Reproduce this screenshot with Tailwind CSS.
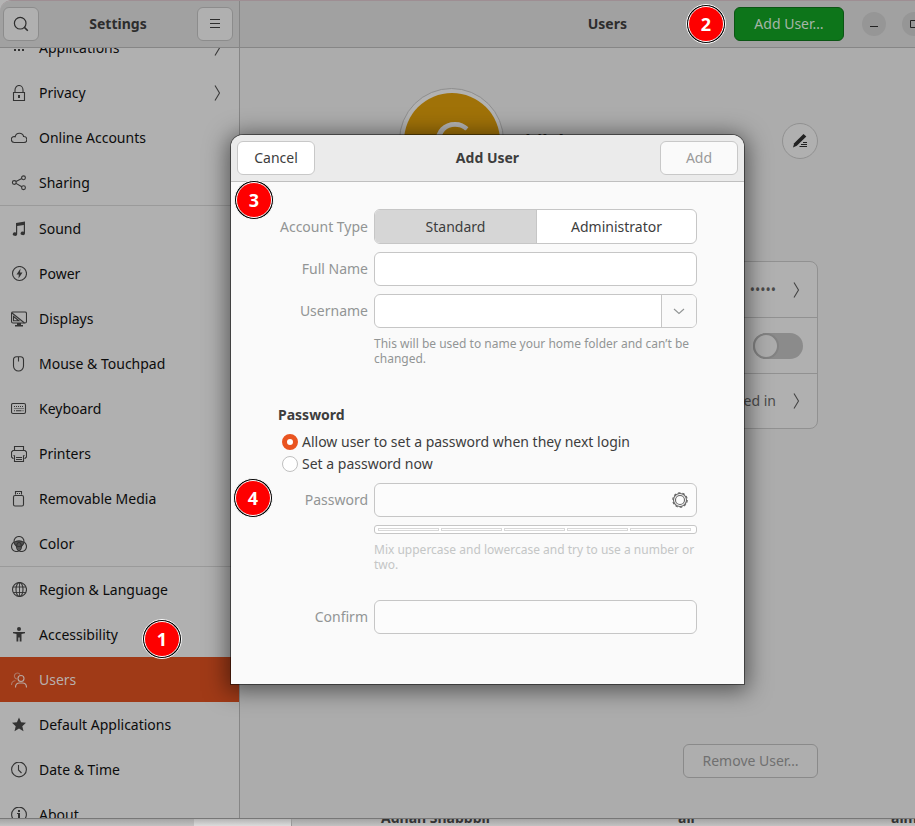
<!DOCTYPE html>
<html lang="en">
<head>
<meta charset="utf-8">
<title>Settings – Users</title>
<script src="https://cdn.jsdelivr.net/npm/@tailwindcss/browser@4"></script>
</head>
<body class="relative flex h-screen flex-col overflow-hidden bg-[#b4b4b4] font-['Noto_Sans',sans-serif] text-sm text-[#0c0c0c]">

<div class="flex min-h-0 flex-1 overflow-hidden rounded-tl-xl border-t border-[#9e8e93] bg-[#acacac]">
  <!-- Sidebar -->
  <aside class="flex w-60 shrink-0 flex-col border-r border-[#868686] bg-[#b0b0b0]">
    <header class="flex h-[47px] shrink-0 items-center justify-between border-b border-[#868686] bg-[#a1a1a1] px-[3px]">
      <button aria-label="Search" class="flex h-[34px] w-9 items-center justify-center rounded-md border border-[#8c8c8c] bg-[#b0b0b0]">
        <svg class="size-4" viewBox="0 0 16 16" fill="none" stroke="#2d2d2d" stroke-width="1.2"><circle cx="7.2" cy="7.2" r="5.8"/><path d="M11.4 11.4l3.4 3.4" stroke-width="1.5"/></svg>
      </button>
      <h1 class="font-bold text-[#2d2d2d]">Settings</h1>
      <button aria-label="Menu" class="mr-[3px] flex h-[34px] w-9 items-center justify-center rounded-md border border-[#8c8c8c] bg-[#b0b0b0]">
        <svg class="size-4" viewBox="0 0 16 16" stroke="#2d2d2d" stroke-width="1"><path d="M3 3.5h10M3 7.5h10M3 11.5h10"/></svg>
      </button>
    </header>
    <nav class="min-h-0 flex-1 overflow-hidden">
      <ul class="-mt-[23px] text-[#0c0c0c]">
        <li><a href="#" class="flex h-[45px] items-center gap-3 px-[11px]"><svg class="size-4" viewBox="0 0 16 16" fill="#333"><path d="M3 9h2v2H3zM7 9h2v2H7zM11 9h2v2h-2z"/></svg><span class="flex-1">Applications</span><svg class="mr-[7px] h-4 w-2" viewBox="0 0 8 16" fill="none" stroke="#3a3a3a" stroke-width="1.1"><path d="M2 .5L6.500 8L2 15.500"/></svg></a></li>
        <li><a href="#" class="flex h-[45px] items-center gap-3 px-[11px]"><svg class="size-4" viewBox="0 0 16 16" fill="none" stroke="#333" stroke-width="1.1"><path d="M2.500 7.500h11v8h-11zM4 7.500V5a4 4.500 0 0 1 8 0v2.500"/><path d="M7 10h2v3H7z" fill="#333" stroke="none"/></svg><span class="flex-1">Privacy</span><svg class="mr-[7px] h-4 w-2" viewBox="0 0 8 16" fill="none" stroke="#3a3a3a" stroke-width="1.1"><path d="M2 .5L6.500 8L2 15.500"/></svg></a></li>
        <li><a href="#" class="flex h-[45px] items-center gap-3 px-[11px]"><svg class="size-4" viewBox="0 0 16 16" fill="none" stroke="#333" stroke-width="1.1"><path d="M3.500 12.500a3 3 0 0 1-.3-6c.3 0 .8.1 1 .2A4.300 4.300 0 0 1 12.600 6.500a3 3 0 0 1 .4 6z"/></svg>Online Accounts</a></li>
        <li><a href="#" class="flex h-[45px] items-center gap-3 px-[11px]"><svg class="size-4" viewBox="0 0 16 16" fill="none" stroke="#333" stroke-width="1.1"><circle cx="3.300" cy="7.500" r="1.900"/><circle cx="12.500" cy="2.800" r="1.900"/><circle cx="12.500" cy="12.700" r="1.900"/><path d="M5 6.600l5.800-3M5 8.400l5.800 3.400"/></svg>Sharing</a></li>
        <li class="border-t border-[#9a9a9a]"><a href="#" class="flex h-[45px] items-center gap-3 px-[11px]"><svg class="size-4" viewBox="0 0 16 16" fill="#333"><path d="M5 2l9-1.500V12.500a2.200 1.800 0 1 1-1.200-1.800V4L6.200 5v8.200a2.200 1.800 0 1 1-1.200-1.700z"/></svg>Sound</a></li>
        <li><a href="#" class="flex h-[45px] items-center gap-3 px-[11px]"><svg class="size-4" viewBox="0 0 16 16" fill="none" stroke="#333" stroke-width="1.1"><circle cx="8.500" cy="7.500" r="7"/><path d="M9.500 2.500L5.500 8.500h2.300L7.500 12.500l4-6H9z" fill="#333" stroke="none"/></svg>Power</a></li>
        <li><a href="#" class="flex h-[45px] items-center gap-3 px-[11px]"><svg class="size-4" viewBox="0 0 16 16" fill="none" stroke="#333" stroke-width="1.1"><rect x=".5" y="1" width="15" height="11" rx="1.500"/><path d="M1 2l12.500 10M2.500 5.500v4.300h5.400z"/><path d="M6 12h4v2h2v1.500H4V14h2z" fill="#333" stroke="none"/></svg>Displays</a></li>
        <li><a href="#" class="flex h-[45px] items-center gap-3 px-[11px]"><svg class="size-4" viewBox="0 0 16 16" fill="none" stroke="#333" stroke-width="1.1"><path d="M5.500.8h4C11.500.8 12.500 2 12.500 4v6a5 5 0 0 1-10 0V4C2.500 2 3.500.8 5.500.8zM7.500 1v4.500"/></svg>Mouse &amp; Touchpad</a></li>
        <li><a href="#" class="flex h-[45px] items-center gap-3 px-[11px]"><svg class="size-4" viewBox="0 0 16 16" fill="none" stroke="#333" stroke-width="1.1"><rect x=".5" y="2.500" width="14" height="10" rx="1.500"/><path d="M3 5.500h9.500M3.500 7.500h9" stroke-dasharray="1 1"/><path d="M3 9.800h1M5 9.800h5.500M11.500 9.800h1"/></svg>Keyboard</a></li>
        <li><a href="#" class="flex h-[45px] items-center gap-3 px-[11px]"><svg class="size-4" viewBox="0 0 16 16" fill="none" stroke="#333" stroke-width="1.100"><path d="M3.500 4.500v-4h9v4M2.500 12.500H2L.5 11V6L2 4.500h12L15.500 6v5L14 12.500h-.5M3.500 9.500v6h9v-6M5 11.500h6M5 13.500h6M2.500 9.500h1M12.500 9.500h1"/></svg>Printers</a></li>
        <li><a href="#" class="flex h-[45px] items-center gap-3 px-[11px]"><svg class="size-4" viewBox="0 0 16 16" fill="none" stroke="#333" stroke-width="1.100"><rect x="2.500" y="4.500" width="10" height="10.500" rx="1.500"/><path d="M4.500 3.500V0.500h6v3M6 2.500h1M8 2.500h1"/></svg>Removable Media</a></li>
        <li><a href="#" class="flex h-[45px] items-center gap-3 px-[11px]"><svg class="size-4" viewBox="0 0 16 16" fill="none" stroke="#333" stroke-width="1.100"><circle cx="8" cy="5.500" r="5"/><circle cx="5.500" cy="10.500" r="5"/><circle cx="10.500" cy="10.500" r="5"/><path d="M3.500 6a6 6 0 0 1 9 0c0 3-2 6-4.500 8.500C5.500 12 3.500 9 3.500 6z" fill="#333" fill-opacity=".75" stroke="none"/></svg>Color</a></li>
        <li class="border-t border-[#9a9a9a]"><a href="#" class="flex h-[45px] items-center gap-3 px-[11px]"><svg class="size-4" viewBox="0 0 16 16" fill="none" stroke="#333" stroke-width="1.100"><circle cx="8.500" cy="7.500" r="7"/><ellipse cx="8.500" cy="7.500" rx="3.500" ry="7"/><path d="M8.500.5v14M2 5h13M2 10.500h13" stroke-width=".9"/></svg>Region &amp; Language</a></li>
        <li><a href="#" class="flex h-[45px] items-center gap-3 px-[11px]"><svg class="size-4" viewBox="0 0 16 16" fill="#333"><circle cx="8" cy="2" r="2"/><path d="M2 5h12v1.200l-3.500.9V14.500H8.700v-4H7.300v4H5.500V7.100L2 6.200z"/></svg>Accessibility</a></li>
        <li><a href="#" aria-current="page" class="flex h-[45px] items-center gap-3 bg-[#a03a17] px-[11px] text-[#b8b0ae]"><svg class="size-4" viewBox="0 0 16 16" fill="none" stroke="#b8a8a2" stroke-width="1.100"><circle cx="10" cy="6.500" r="3"/><path d="M4.500 15.500c0-3.500 2-4.500 4-4.500h3c2 0 4 1 4 4.500"/><path d="M6 7A3 3 0 1 1 9 2.500M.5 13c0-3 1.500-4 4-4.200" opacity=".55"/></svg>Users</a></li>
        <li><a href="#" class="flex h-[45px] items-center gap-3 px-[11px]"><svg class="size-4" viewBox="0 0 16 16" fill="#333"><path d="M8 .5l2.100 4.800 4.900.4-3.700 3.500 1.200 5.100L8 11.500l-4.500 2.800 1.200-5.100L1 5.700l4.900-.4z"/></svg>Default Applications</a></li>
        <li><a href="#" class="flex h-[45px] items-center gap-3 px-[11px]"><svg class="size-4" viewBox="0 0 16 16" fill="none" stroke="#333" stroke-width="1.100"><circle cx="8" cy="7.500" r="7.400"/><path d="M7.500 3v5l3 3"/></svg>Date &amp; Time</a></li>
        <li><a href="#" class="flex h-[45px] items-center gap-3 px-[11px]"><svg class="size-4" viewBox="0 0 16 16" fill="none" stroke="#333" stroke-width="1.100"><circle cx="8" cy="7.500" r="7.400"/><path d="M7 3h2v2H7zM6 6h3v5h1v1H6v-1h1V7H6z" fill="#333" stroke="none"/></svg>About</a></li>
      </ul>
    </nav>
  </aside>

  <!-- User panel -->
  <main class="flex min-w-0 flex-1 flex-col overflow-hidden">
    <header class="-mr-[11px] flex h-[47px] shrink-0 items-center justify-end border-b border-[#868686] bg-[#a1a1a1]">
      <h2 class="mr-[107px] font-bold text-[#2d2d2d]">Users</h2>
      <button class="mr-[18px] h-[34px] w-[110px] rounded-md border border-[#0b5514] bg-[#0d751a] text-[#a5b5a7]">Add User…</button>
      <button aria-label="Minimize" class="mr-4 flex size-6 items-center justify-center rounded-full bg-[#969696]"><svg class="size-4" viewBox="0 0 16 16" stroke="#222"><path d="M4 10.500h8"/></svg></button>
      <button aria-label="Maximize" class="flex size-6 items-center justify-center rounded-full bg-[#969696]"><svg class="size-4" viewBox="0 0 16 16" fill="none" stroke="#222"><path d="M4.500 4.500h7v7h-7z"/></svg></button>
    </header>
    <div class="flex min-h-0 flex-1 flex-col pt-10 pr-[97px] pb-10 pl-[159px]">
      <div class="flex items-center">
        <div class="flex size-[105px] items-center justify-center rounded-full border border-[#8e8e8e] bg-[#b2b2b2]">
          <div class="flex size-24 items-center justify-center rounded-full bg-[#a07208] font-['Lato',sans-serif] text-[56px] leading-none text-[#b5b5b5]">C</div>
        </div>
        <h3 class="ml-3 text-lg font-bold text-[#222]">chilal</h3>
        <button aria-label="Edit name" class="ml-auto flex size-9 items-center justify-center rounded-full border border-[#919191] bg-[#b0b0b0]"><svg class="size-4" viewBox="0 0 16 16"><path d="M1 14.500l1.200-4.300L11.500 1l2.800 2.400-9.500 9.300z" fill="#222"/><path d="M11 9.500h4M9 11.500h6M7.500 13.500H15" stroke="#222"/></svg></button>
      </div>
      <div class="mt-[68px] rounded-lg border border-[#919191] bg-[#b0b0b0] text-[#4a4a4a]">
        <button class="flex h-[55px] w-full items-center justify-end pr-[17px]">•••••<svg class="ml-4 h-4 w-2" viewBox="0 0 8 16" fill="none" stroke="#444" stroke-width="1.100"><path d="M2 .5L6.500 8L2 15.500"/></svg></button>
        <div class="flex h-14 items-center justify-end border-t border-[#919191] pr-3.5">
          <button role="switch" aria-checked="false" aria-label="Automatic Login" class="h-[26px] w-[50px] rounded-full bg-[#8b8b8b]"><span class="block size-[26px] rounded-full border-2 border-[#828282] bg-[#acacac]"></span></button>
        </div>
        <button class="flex h-[55px] w-full items-center justify-end border-t border-[#919191] pr-[17px]">Logged in<svg class="ml-4 h-4 w-2" viewBox="0 0 8 16" fill="none" stroke="#444" stroke-width="1.100"><path d="M2 .5L6.500 8L2 15.500"/></svg></button>
      </div>
      <button disabled class="mt-auto h-[34px] w-[135px] self-end rounded-md border border-[#8a8a8a] bg-[#aeaeae] text-[#707070]">Remove User…</button>
    </div>
  </main>
</div>

<!-- Window behind -->
<div class="flex h-2 shrink-0 overflow-hidden border-t border-[#777] bg-linear-to-b from-[#a4a4a4] to-[#c2c2c2]">
  <div class="w-[194px] shrink-0"></div>
  <div class="w-[98px] shrink-0 border-r border-[#999] bg-linear-to-b from-[#b4b4b4] to-[#dcdcdc]"></div>
  <div class="flex min-w-0 flex-1 items-end font-bold text-[#333]">
    <span class="ml-[89px] w-[297px] shrink-0 leading-4">Adnan Shabbbir</span><span class="w-[213px] shrink-0 leading-4">ali</span><span class="leading-4">alm</span>
  </div>
</div>

<!-- Add User dialog -->
<form role="dialog" aria-label="Add User" class="absolute top-[135px] left-[231px] w-[513px] rounded-t-xl bg-[#fafafa] text-[#3d3d3d] shadow-[0_0_0_1px_rgba(0,0,0,0.45),0_3px_22px_4px_rgba(0,0,0,0.5)]">
  <header class="flex h-[47px] items-center justify-between rounded-t-xl border-b border-[#bfbfbf] bg-[#ebebeb] px-1.5">
    <button type="button" class="h-[34px] w-[78px] rounded-md border border-[#c8c8c8] bg-white">Cancel</button>
    <h2 class="font-bold">Add User</h2>
    <button disabled class="h-[34px] w-[78px] rounded-md border border-[#c8c8c8] bg-[#fafafa] text-[#9a9a9a]">Add</button>
  </header>
  <div class="px-[47px] pt-[27px] pb-[50px]">
    <div class="grid grid-cols-[90px_1fr] items-center gap-x-1.5 gap-y-2 text-right">
      <span class="whitespace-nowrap text-[#929595]">Account Type</span>
      <div role="group" aria-label="Account Type" class="flex h-[35px] overflow-hidden rounded-md border border-[#c6c6c6] bg-white">
        <button type="button" aria-pressed="true" class="w-[162px] border-r border-[#c6c6c6] bg-[#d6d6d6]">Standard</button>
        <button type="button" aria-pressed="false" class="flex-1">Administrator</button>
      </div>
      <label for="full" class="text-[#929595]">Full Name</label>
      <input id="full" type="text" class="h-[34px] w-full rounded-md border border-[#c6c6c6] bg-white px-2 text-left">
      <label for="user" class="text-[#929595]">Username</label>
      <div class="flex h-[34px] overflow-hidden rounded-md border border-[#c6c6c6] bg-white">
        <input id="user" type="text" class="min-w-0 flex-1 px-2 text-left">
        <button type="button" aria-label="Suggestions" class="flex w-[35px] items-center justify-center border-l border-[#c6c6c6] bg-[#fafafa]"><svg class="size-4" viewBox="0 0 16 16" fill="none" stroke="#929595" stroke-width="1.100"><path d="M3 6l5 4.500L13 6"/></svg></button>
      </div>
      <p class="col-start-2 text-left text-xs leading-[15px] text-[#929595]">This will be used to name your home folder and can’t be changed.</p>
    </div>

    <fieldset class="mt-[39px]">
      <legend class="leading-5 font-bold">Password</legend>
      <label class="mt-[6px] ml-1 flex h-[22px] items-center gap-1"><input type="radio" name="mode" checked class="size-4 appearance-none rounded-full border border-[#c0c0c0] bg-white checked:border-[5px] checked:border-[#e95420]">Allow user to set a password when they next login</label>
      <label class="ml-1 flex h-[22px] items-center gap-1"><input type="radio" name="mode" class="size-4 appearance-none rounded-full border border-[#c0c0c0] bg-white checked:border-[5px] checked:border-[#e95420]">Set a password now</label>
    </fieldset>

    <div class="mt-2 grid grid-cols-[90px_1fr] items-center gap-x-1.5 gap-y-2 text-right">
      <label for="pw" class="text-[#929595]">Password</label>
      <div class="flex h-[34px] items-center rounded-md border border-[#c6c6c6] bg-[#fcfcfc] pr-2">
        <input id="pw" type="password" disabled class="min-w-0 flex-1 px-2">
        <button type="button" aria-label="Generate password"><svg class="size-4" viewBox="0 0 16 16" fill="none" stroke="#666"><circle cx="8" cy="8" r="7.200" stroke-width="1.200" stroke-dasharray="2.500 2.026"/><circle cx="8" cy="8" r="6.500" stroke-width="1.100"/><circle cx="8" cy="8" r="4.500" stroke-width="1.100"/></svg></button>
      </div>
      <div role="meter" aria-label="Password strength" aria-valuenow="0" aria-valuemin="0" aria-valuemax="5" class="col-start-2 flex h-[9px] items-center gap-0.5 rounded-[3px] border border-[#c6c6c6] bg-white pr-[5px] pl-[3px]">
        <i class="h-[3px] flex-1 border border-[#d8d8d8]"></i><i class="h-[3px] flex-1 border border-[#d8d8d8]"></i><i class="h-[3px] flex-1 border border-[#d8d8d8]"></i><i class="h-[3px] flex-1 border border-[#d8d8d8]"></i><i class="h-[3px] flex-1 border border-[#d8d8d8]"></i>
      </div>
      <p class="col-start-2 text-left text-xs leading-[15px] text-[#c4c6c6]">Mix uppercase and lowercase and try to use a number or two.</p>
      <label for="confirm" class="mt-5 text-[#929595]">Confirm</label>
      <input id="confirm" type="password" disabled class="mt-5 h-[34px] w-full rounded-md border border-[#c6c6c6] bg-[#fcfcfc] px-2">
    </div>
  </div>
</form>

<!-- Step markers -->
<div class="absolute top-[619px] left-[142px] flex size-10 items-center justify-center rounded-full border border-white bg-black p-px text-lg font-bold text-white"><span class="flex size-full items-center justify-center rounded-full border border-white bg-[#fe0000]">1</span></div>
<div class="absolute top-1 left-[686px] flex size-10 items-center justify-center rounded-full border border-white bg-black p-px text-lg font-bold text-white"><span class="flex size-full items-center justify-center rounded-full border border-white bg-[#fe0000]">2</span></div>
<div class="absolute top-[180px] left-[234px] flex size-10 items-center justify-center rounded-full border border-white bg-black p-px text-lg font-bold text-white"><span class="flex size-full items-center justify-center rounded-full border border-white bg-[#fe0000]">3</span></div>
<div class="absolute top-[478px] left-[233px] flex size-10 items-center justify-center rounded-full border border-white bg-black p-px text-lg font-bold text-white"><span class="flex size-full items-center justify-center rounded-full border border-white bg-[#fe0000]">4</span></div>
</body>
</html>
